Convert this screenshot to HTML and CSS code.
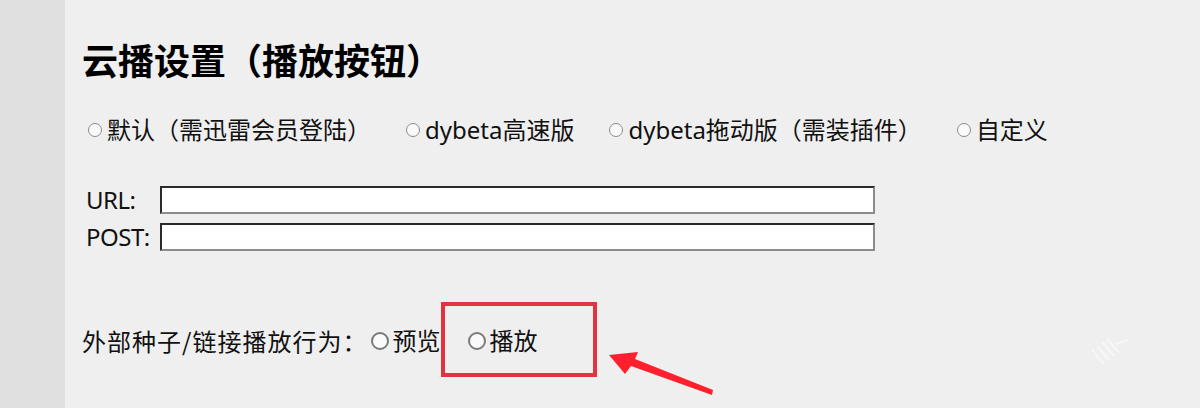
FILE: index.html
```html
<!DOCTYPE html>
<html lang="zh-CN">
<head>
<meta charset="utf-8">
<title>云播设置</title>
<link rel="stylesheet" href="styles.css">
</head>
<body>
<div class="page">
  <aside class="side"></aside>
  <main class="content">
    <h1 class="title">云播设置（播放按钮）</h1>
    <div class="radios">
      <label class="opt"><input type="radio" name="player"><span>默认（需迅雷会员登陆）</span></label>
      <label class="opt"><input type="radio" name="player"><span>dybeta高速版</span></label>
      <label class="opt"><input type="radio" name="player"><span>dybeta拖动版（需装插件）</span></label>
      <label class="opt"><input type="radio" name="player"><span>自定义</span></label>
    </div>
    <div class="fields">
      <div class="field"><label class="flabel">URL:</label><input class="finput" type="text"></div>
      <div class="field"><label class="flabel">POST:</label><input class="finput" type="text"></div>
    </div>
    <div class="behavior">
      <span class="blabel">外部种子/链接播放行为：</span>
      <label class="opt big"><input type="radio" name="act"><span>预览</span></label>
      <label class="opt big marked"><input type="radio" name="act"><span>播放</span><span class="redbox"></span></label>
    </div>
  </main>
  <svg class="arrow" width="120" height="60" viewBox="0 0 120 60">
    <polygon points="9,15 38,12 35,19 113,50 112,55 31,26 25,34" fill="#ff1f2d"/>
  </svg>
  <svg class="mark" width="44" height="32" viewBox="0 0 44 32">
    <g stroke="#f7f7f7" stroke-width="2">
      <line x1="4" y1="14" x2="16" y2="28"/>
      <line x1="9" y1="10" x2="21" y2="24"/>
      <line x1="14" y1="6" x2="26" y2="20"/>
      <line x1="19" y1="3" x2="31" y2="16"/>
      <line x1="28" y1="8" x2="40" y2="4"/>
    </g>
  </svg>
</div>
</body>
</html>
```

FILE: styles.css
```css
html, body {
  margin: 0;
  padding: 0;
}
body {
  width: 1200px;
  height: 408px;
  overflow: hidden;
  background: #efefef;
  font-family: "Noto Sans", "Noto Sans CJK SC", sans-serif;
  color: #111;
}
.page {
  position: relative;
  display: flex;
  width: 1200px;
  height: 408px;
}
.side {
  width: 65px;
  flex: none;
  background: #e0e0e0;
}
.content {
  flex: 1;
  padding-left: 17px;
}
.title {
  margin: 41px 0 0 0;
  font-family: "Noto Sans CJK SC", sans-serif;
  font-size: 36px;
  line-height: 36px;
  font-weight: 700;
  color: #000;
}
.radios {
  margin-top: 41px;
  display: flex;
  align-items: center;
  gap: 35px;
  padding-left: 6px;
}
.opt {
  display: flex;
  align-items: center;
  font-size: 24px;
  line-height: 24px;
}
.opt span {
  font-family: "Noto Sans", "Noto Sans CJK SC", sans-serif;
}
.opt input {
  appearance: none;
  -webkit-appearance: none;
  margin: 0 5px 0 0;
  width: 14px;
  height: 14px;
  border-radius: 50%;
  border: 1.5px solid #8a8a8a;
  background: #fafafa;
  box-sizing: border-box;
  flex: none;
}
.fields {
  margin-top: 44px;
  display: flex;
  flex-direction: column;
  gap: 9px;
}
.field {
  display: flex;
  align-items: center;
}
.flabel {
  width: 74px;
  margin-left: 4px;
  font-size: 24px;
  line-height: 28px;
  letter-spacing: -0.5px;
}
.finput {
  width: 715px;
  height: 28px;
  box-sizing: border-box;
  margin: 0;
  padding: 0;
  background: #fff;
  border-style: solid;
  border-width: 2px;
  border-color: #2a2a2a #8c8c8c #8c8c8c #2a2a2a;
}
.behavior {
  margin-top: 78px;
  display: flex;
  align-items: center;
  font-size: 24px;
  line-height: 24px;
}
.blabel {
  font-family: "Noto Sans CJK SC", sans-serif;
  letter-spacing: 1px;
  margin-right: 4px;
}
.opt.big input {
  width: 18px;
  height: 18px;
  border: 2px solid #7a7a7a;
  margin-right: 3px;
}
.opt.big + .opt.big {
  margin-left: 28px;
}
.marked {
  position: relative;
}
.redbox {
  position: absolute;
  left: -27px;
  top: -27px;
  width: 156px;
  height: 75px;
  box-sizing: border-box;
  border: 4px solid #e2343e;
}
.arrow {
  position: absolute;
  left: 600px;
  top: 340px;
}
.mark {
  position: absolute;
  left: 1088px;
  top: 336px;
}
```
